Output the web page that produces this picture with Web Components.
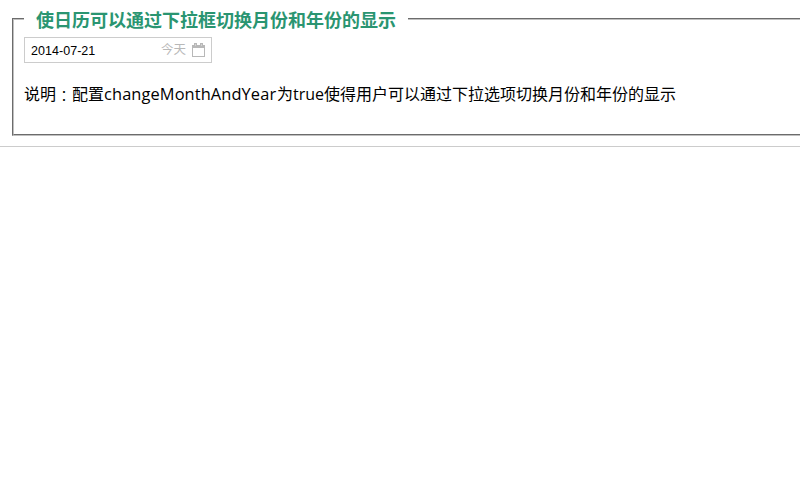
<!DOCTYPE html>
<html lang="zh-CN">
<head>
<meta charset="utf-8">
<title>日历</title>
<style>
body { margin: 0; background: #fff; color: #000; overflow: hidden; font: 16px/24px "Open Sans", "Noto Sans CJK SC", sans-serif; }
</style>
</head>
<body>
<demo-section>
  <span slot="title">使日历可以通过下拉框切换月份和年份的显示</span>
  <date-field value="2014-07-21" label="今天"></date-field>
  <demo-note><span slot="label">说明</span><span class="text">配置<latin-word style="--w:173px;--s:.1px;--f:16.4px">changeMonthAndYear</latin-word>为<latin-word style="--w:31px;--s:0;--f:16px">true</latin-word>使得用户可以通过下拉选项切换月份和年份的显示</span></demo-note>
</demo-section>
<script>
const define = (name, render) => customElements.define(name, class extends HTMLElement {
  constructor() {
    super();
    this.attachShadow({ mode: 'open' }).innerHTML = render(this);
  }
});

define('demo-section', () => `
  <style>
    :host { display: block; height: 146px; border-bottom: 1px solid #ccc; overflow: hidden; }
    fieldset { box-sizing: border-box; margin: 0 -12px 0 12px; padding: 0 10px; height: 136px; border: 2px groove silver; min-width: 0; }
    legend { padding: 0 12px; height: 37px; line-height: 38px; font-family: "Noto Sans CJK SC", sans-serif; font-size: 18px; font-weight: 700; color: #2a9571; }
  </style>
  <fieldset><legend><slot name="title"></slot></legend><slot></slot></fieldset>`);

define('date-field', el => `
  <style>
    :host { display: flex; align-items: center; box-sizing: border-box; width: 188px; height: 26px; padding: 0 6px; border: 1px solid #ccc; font: 12px/24px "Liberation Sans", "Noto Sans CJK SC", sans-serif; }
    .value { flex: 1; padding-top: 2px; font-size: 12.5px; letter-spacing: .04px; }
    .today { color: #b8b8b8; font-size: 12.5px; margin-right: 6px; }
    svg { display: block; width: 13px; height: 14px; }
  </style>
  <span class="value">${el.getAttribute('value')}</span>
  <span class="today">${el.getAttribute('label')}</span>
  <svg viewBox="0 0 13 14" fill="#b8b8b8" shape-rendering="crispEdges"><path fill-rule="evenodd" d="M0 2h2V0h3v2h3V0h3v2h2v12H0zM1 5v8h11V5z"/><path fill="#d2d2d2" d="M3 1h1v2H3zM9 1h1v2H9z"/></svg>`);

define('demo-note', () => `
  <style>
    :host { display: block; margin-top: 19px; white-space: nowrap; }
    .colon { font-family: "Noto Sans CJK TC", sans-serif; font-weight: 300; line-height: 0; vertical-align: -2px; }
  </style>
  <slot name="label"></slot><span class="colon" lang="zh-TW">：</span><slot></slot>`);

define('latin-word', () => `
  <style>:host { display: inline-block; width: var(--w); font-size: var(--f); letter-spacing: var(--s); }</style><slot></slot>`);
</script>
</body>
</html>
